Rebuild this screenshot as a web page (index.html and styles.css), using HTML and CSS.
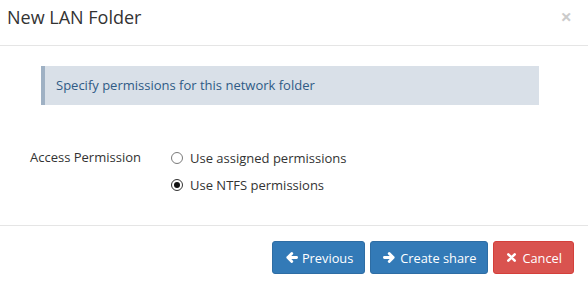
FILE: index.html
```
<!DOCTYPE html>
<html>
<head>
<meta charset="utf-8">
<link rel="stylesheet" href="styles.css">
</head>
<body>
<div class="modal">
  <div class="modal-header">
    <h4 class="modal-title">New LAN Folder</h4>
    <span class="close">×</span>
  </div>
  <div class="modal-body">
    <div class="alert">Specify permissions for this network folder</div>
    <div class="form-row">
      <div class="form-label">Access Permission</div>
      <div class="radios">
        <label class="radio"><span class="radio-dot"></span>Use assigned permissions</label>
        <label class="radio"><span class="radio-dot checked"></span>Use NTFS permissions</label>
      </div>
    </div>
  </div>
  <div class="modal-footer">
    <button class="btn btn-primary"><svg class="ico" viewBox="0 0 14 14"><path d="M12.5 7H3M7.3 2.6L3 7l4.3 4.4" fill="none" stroke="#fff" stroke-width="3" stroke-linecap="round" stroke-linejoin="round"/></svg>Previous</button>
    <button class="btn btn-primary"><svg class="ico" viewBox="0 0 14 14"><path d="M1.5 7H11M6.7 2.6L11 7l-4.3 4.4" fill="none" stroke="#fff" stroke-width="3" stroke-linecap="round" stroke-linejoin="round"/></svg>Create share</button>
    <button class="btn btn-danger"><svg class="ico ico-x" viewBox="0 0 12 12"><path d="M2.5 2.5l7 7M9.5 2.5l-7 7" fill="none" stroke="#fff" stroke-width="2.8" stroke-linecap="round"/></svg>Cancel</button>
  </div>
</div>
</body>
</html>
```
FILE: styles.css
```
* { box-sizing: border-box; }
html, body { margin: 0; padding: 0; background: #fff; }
body {
  font-family: "Open Sans", "Noto Sans", sans-serif;
  font-size: 13px;
  color: #333;
  width: 588px;
  height: 288px;
  overflow: hidden;
}
.modal { width: 588px; }
.modal-header {
  display: flex;
  justify-content: space-between;
  align-items: flex-start;
  padding: 4px 16px 15px 7px;
  border-bottom: 1px solid #e5e5e5;
  height: 46px;
}
.modal-title {
  margin: 0;
  font-size: 18px;
  font-weight: 400;
  line-height: 26px;
  color: #333;
}
.close {
  font-size: 20px;
  line-height: 20px;
  font-weight: 700;
  color: #000;
  opacity: 0.2;
  margin-top: 3px;
}
.modal-body {
  padding: 20px 49px 27px 30px;
  height: 179px;
}
.alert {
  margin-left: 11px;
  background: #d9e0e8;
  border-left: 4px solid #9fb1c4;
  color: #2f5b86;
  height: 39px;
  line-height: 39px;
  padding: 0 11px;
}
.form-row {
  display: flex;
  margin-top: 39px;
}
.form-label {
  width: 141px;
  line-height: 27px;
}
.radios { display: flex; flex-direction: column; }
.radio {
  display: flex;
  align-items: center;
  height: 27px;
}
.radio-dot {
  width: 12px;
  height: 12px;
  border: 1px solid #7a7a7a;
  border-radius: 50%;
  margin-right: 7px;
  display: flex;
  align-items: center;
  justify-content: center;
}
.radio-dot.checked { border-color: #333; }
.radio-dot.checked::after {
  content: "";
  width: 6px;
  height: 6px;
  border-radius: 50%;
  background: #111;
}
.modal-footer {
  border-top: 1px solid #e5e5e5;
  padding: 15px 14px 14px;
  display: flex;
  justify-content: flex-end;
  gap: 5px;
}
.btn {
  height: 33px;
  font-family: inherit;
  font-size: 12.8px;
  color: #fff;
  border-radius: 3px;
  border: 1px solid;
  padding: 0 11px 0 12px;
  display: flex;
  align-items: center;
  cursor: pointer;
}
.btn-primary { background: #337ab7; border-color: #2e6da4; }
.btn-danger { background: #d9534f; border-color: #d43f3a; }
.ico { width: 13px; height: 13px; margin-right: 4px; }
.ico-x { width: 11px; height: 11px; margin-right: 5px; }
```
